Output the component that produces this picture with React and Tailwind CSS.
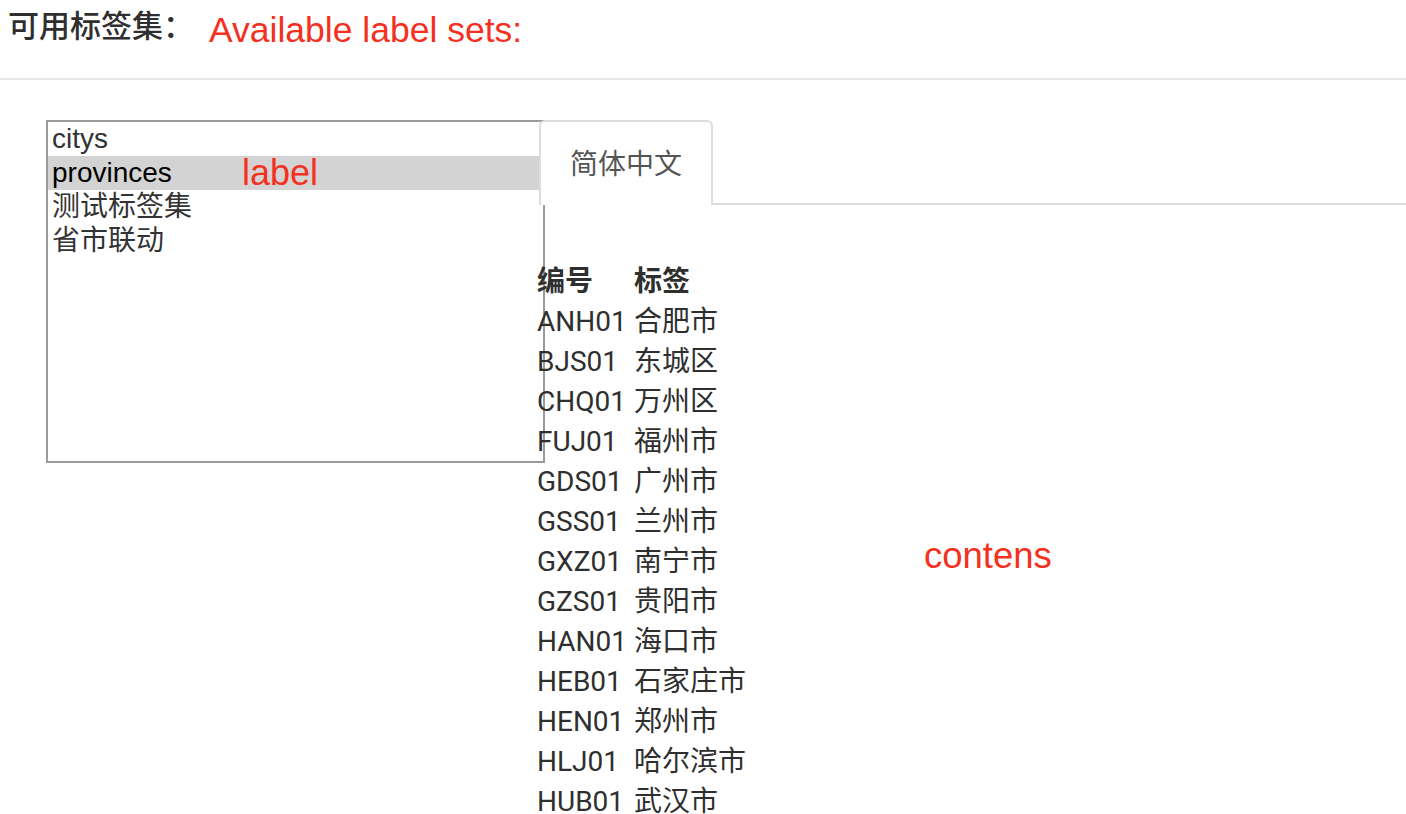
import React from "react";

const sets = ["citys", "provinces", "测试标签集", "省市联动"];

const rows = [
  ["ANH01", "合肥市"],
  ["BJS01", "东城区"],
  ["CHQ01", "万州区"],
  ["FUJ01", "福州市"],
  ["GDS01", "广州市"],
  ["GSS01", "兰州市"],
  ["GXZ01", "南宁市"],
  ["GZS01", "贵阳市"],
  ["HAN01", "海口市"],
  ["HEB01", "石家庄市"],
  ["HEN01", "郑州市"],
  ["HLJ01", "哈尔滨市"],
  ["HUB01", "武汉市"],
];

const cjk = "font-['Noto_Sans_CJK_SC',sans-serif]";

export default function App() {
  const [active, setActive] = React.useState("provinces");

  return (
    <div className="relative min-h-[814px] bg-white text-[#333]">
      {/* header */}
      <div className="flex h-[80px] items-start border-b-2 border-[#e6e6e6] pl-[8px]">
        <span className={`mt-[7px] text-[31px] font-medium leading-[34px] text-[#2f2f2f] ${cjk}`}>可用标签集：</span>
        <span className="ml-[15px] mt-[10px] font-['Liberation_Sans',Arial,sans-serif] text-[35.5px] leading-[40px] text-[#f4301f]">
          Available label sets:
        </span>
      </div>

      <div className="flex pl-[46px] pt-[40px]">
        {/* label set list */}
        <ul className="h-[343px] w-[499px] shrink-0 border-2 border-[#9a9a9a] bg-white font-['Liberation_Sans','Noto_Sans_CJK_SC',sans-serif] text-[28px] leading-[34px]">
          {sets.map((s) => (
            <li
              key={s}
              onClick={() => setActive(s)}
              className={s === active ? "bg-[#d3d3d3] pl-[4px] text-black" : "pl-[4px]"}
            >
              {s}
            </li>
          ))}
        </ul>

        {/* contents */}
        <div className="-ml-[8px] flex-1">
          <div className="ml-[2px] flex border-b-2 border-[#dddddd]">
            <div className={`-mb-[2px] h-[85px] rounded-t-[6px] border-2 border-b-0 border-[#dddddd] bg-white px-[29px] pt-[20px] text-[28px] leading-[40px] text-[#555] ${cjk}`}>
              简体中文
            </div>
          </div>

          <table className="mt-[57px] font-['Roboto','Noto_Sans_CJK_SC',sans-serif] text-[28px] leading-[40px] text-[#2f2f2f]">
            <thead>
              <tr>
                <th className="w-[97px] p-0 text-left font-bold">编号</th>
                <th className="p-0 text-left font-bold">标签</th>
              </tr>
            </thead>
            <tbody>
              {rows.map(([code, name]) => (
                <tr key={code}>
                  <td className="p-0">{code}</td>
                  <td className="p-0">{name}</td>
                </tr>
              ))}
            </tbody>
          </table>
        </div>
      </div>

      {/* annotations */}
      <span className="absolute left-[242px] top-[153px] font-['Liberation_Sans',Arial,sans-serif] text-[36px] leading-[40px] text-[#f4301f]">
        label
      </span>
      <span className="absolute left-[924px] top-[536px] font-['Liberation_Sans',Arial,sans-serif] text-[36.5px] leading-[40px] text-[#f4301f]">
        contens
      </span>
    </div>
  );
}
